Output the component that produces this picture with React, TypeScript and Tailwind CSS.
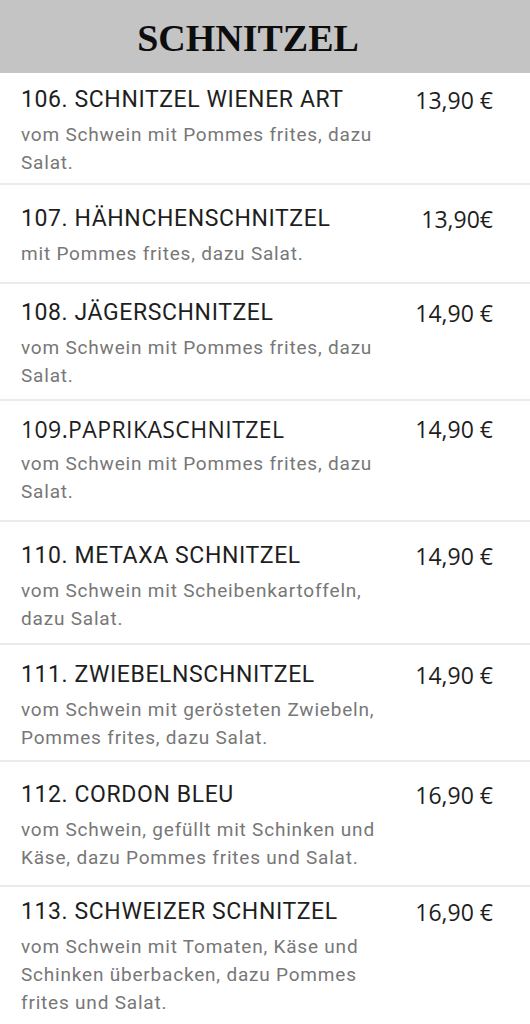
const items = [
  {
    title: "106. SCHNITZEL WIENER ART",
    price: "13,90 €",
    lines: ["vom Schwein mit Pommes frites, dazu", "Salat."],
    row: "pt-[13px] pb-[6px]",
  },
  {
    title: "107. HÄHNCHENSCHNITZEL",
    price: "13,90€",
    lines: ["mit Pommes frites, dazu Salat."],
    row: "pt-[20px] pb-[14px]",
  },
  {
    title: "108. JÄGERSCHNITZEL",
    price: "14,90 €",
    lines: ["vom Schwein mit Pommes frites, dazu", "Salat."],
    row: "pt-[15px] pb-[9px]",
  },
  {
    title: "109.PAPRIKASCHNITZEL",
    price: "14,90 €",
    lines: ["vom Schwein mit Pommes frites, dazu", "Salat."],
    row: "pt-[14px] pb-[14px]",
    // this one is set in a different face in the original card
    titleFont: "font-['Open_Sans',sans-serif] text-[23px] tracking-[0.4px]",
  },
  {
    title: "110. METAXA SCHNITZEL",
    price: "14,90 €",
    lines: ["vom Schwein mit Scheibenkartoffeln,", "dazu Salat."],
    row: "pt-[20px] pb-[10px]",
  },
  {
    title: "111. ZWIEBELNSCHNITZEL",
    price: "14,90 €",
    lines: ["vom Schwein mit gerösteten Zwiebeln,", "Pommes frites, dazu Salat."],
    row: "pt-[16px] pb-[8px]",
  },
  {
    title: "112. CORDON BLEU",
    price: "16,90 €",
    lines: ["vom Schwein, gefüllt mit Schinken und", "Käse, dazu Pommes frites und Salat."],
    row: "pt-[19px] pb-[13px]",
  },
  {
    title: "113. SCHWEIZER SCHNITZEL",
    price: "16,90 €",
    lines: [
      "vom Schwein mit Tomaten, Käse und",
      "Schinken überbacken, dazu Pommes",
      "frites und Salat.",
    ],
    row: "pt-[11px] pb-[10px]",
  },
];

export default function App() {
  return (
    <div className="w-[530px] h-[1024px] overflow-hidden bg-white">
      <header className="h-[73px] bg-[#c4c4c4] flex items-center justify-center">
        <h1 className="font-['Liberation_Serif',serif] font-bold text-[38px] leading-none text-[#0d0d0d] -ml-[34px] mt-[2px]">
          SCHNITZEL
        </h1>
      </header>

      <ul>
        {items.map((item) => (
          <li
            key={item.title}
            className={`border-b-2 border-[#ebebeb] pl-[21px] pr-[37px] ${item.row}`}
          >
            <div className="flex items-center justify-between h-[28px]">
              <span
                className={`text-[#1e1e1e] whitespace-nowrap ${
                  item.titleFont ??
                  "font-['Roboto',sans-serif] text-[23px] tracking-[0.6px]"
                }`}
              >
                {item.title}
              </span>
              <span className="font-['Open_Sans',sans-serif] text-[23px] text-[#1e1e1e] whitespace-nowrap">
                {item.price}
              </span>
            </div>
            <div className="mt-[7px] font-['Roboto',sans-serif] text-[19px] tracking-[0.8px] leading-[28px] text-[#777777]">
              {item.lines.map((line) => (
                <p key={line} className="whitespace-nowrap">
                  {line}
                </p>
              ))}
            </div>
          </li>
        ))}
      </ul>
    </div>
  );
}
